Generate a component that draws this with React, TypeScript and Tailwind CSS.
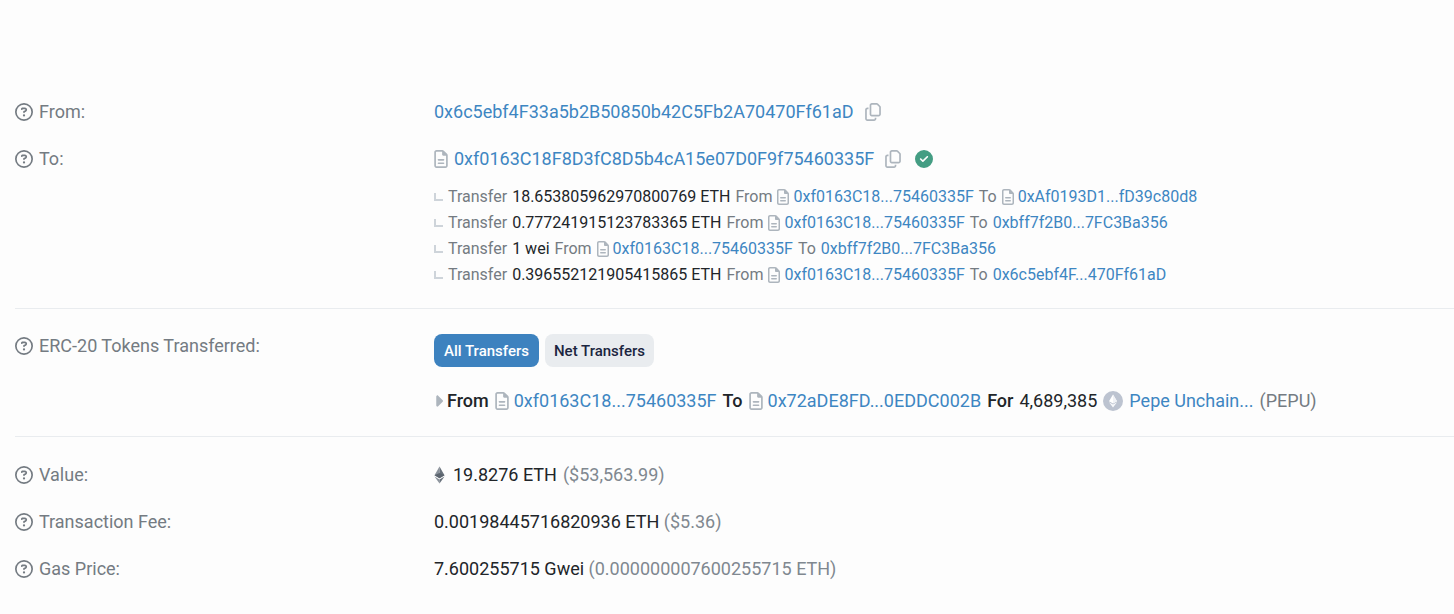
import type { ReactNode } from "react";
import {
  FaCaretRight,
  FaCircleCheck,
  FaRegCircleQuestion,
  FaRegCopy,
  FaRegFileLines,
} from "react-icons/fa6";

type Party = {
  address: string;
  contract?: boolean;
};

type InternalTransfer = {
  amount: string;
  from: Party;
  to: Party;
};

const ROUTER: Party = { address: "0xf0163C18...75460335F", contract: true };

const internalTransfers: InternalTransfer[] = [
  {
    amount: "18.653805962970800769 ETH",
    from: ROUTER,
    to: { address: "0xAf0193D1...fD39c80d8", contract: true },
  },
  {
    amount: "0.777241915123783365 ETH",
    from: ROUTER,
    to: { address: "0xbff7f2B0...7FC3Ba356" },
  },
  {
    amount: "1 wei",
    from: ROUTER,
    to: { address: "0xbff7f2B0...7FC3Ba356" },
  },
  {
    amount: "0.396552121905415865 ETH",
    from: ROUTER,
    to: { address: "0x6c5ebf4F...470Ff61aD" },
  },
];

function Row({ label, children }: { label: string; children: ReactNode }) {
  return (
    <div className="grid grid-cols-[419px_1fr]">
      <div className="flex h-6 items-center gap-[6px] text-[#747b82]">
        <FaRegCircleQuestion className="size-[18px]" />
        {label}
      </div>
      <div className="min-w-0">{children}</div>
    </div>
  );
}

function AddressLink({ children }: { children: ReactNode }) {
  return (
    <a href="#" className="text-[#3d86c2] hover:text-[#0a58ca]">
      {children}
    </a>
  );
}

function CopyButton() {
  return (
    <button type="button" aria-label="Copy address" className="text-[#adb5bd]">
      <FaRegCopy className="size-[18px]" />
    </button>
  );
}

function SmallParty({ address, contract }: Party) {
  return (
    <span className="flex items-center gap-1">
      {contract && <FaRegFileLines className="h-4 w-3 text-[#adb5bd]" />}
      <AddressLink>{address}</AddressLink>
    </span>
  );
}

function TokenParty({ address, contract }: Party) {
  return (
    <span className="flex items-center gap-[5px]">
      {contract && <FaRegFileLines className="h-[18px] w-[14px] text-[#adb5bd]" />}
      <AddressLink>{address}</AddressLink>
    </span>
  );
}

function EthIcon() {
  return (
    <svg className="h-[18px] w-[11px]" viewBox="0 0 11 18">
      <path d="M5.5 0.5 0.5 9.2 5.5 12.2Z" fill="#8a929b" />
      <path d="M5.5 0.5 10.5 9.2 5.5 12.2Z" fill="#68717b" />
      <path d="M0.5 10.4 5.5 13.4V17.5Z" fill="#8a929b" />
      <path d="M10.5 10.4 5.5 13.4V17.5Z" fill="#68717b" />
      <path d="M0.5 9.2 5.5 7 10.5 9.2 5.5 12.2Z" fill="#5c656f" />
    </svg>
  );
}

function TokenLogo() {
  return (
    <svg className="size-5" viewBox="0 0 20 20">
      <circle cx="10" cy="10" r="10" fill="#bcc3d0" />
      <path d="M10 3.5 6 10.2 10 12.5 14 10.2Z" fill="#fff" />
      <path d="M10 3.5V12.5L14 10.2Z" fill="#f0f2f6" />
      <path d="M6 11.2 10 13.5 14 11.2 10 16.5Z" fill="#f8f9fb" />
    </svg>
  );
}

export default function App() {
  return (
    <main className="min-h-screen bg-[#fdfdfd] pt-[100px] pb-8 pl-[15px] font-['Roboto',sans-serif] text-[18px] leading-6 text-[#212529]">
      <section className="flex flex-col gap-[23px] border-b border-[#e9ecef] pb-5">
        <Row label="From:">
          <div className="flex items-center gap-[10px]">
            <AddressLink>0x6c5ebf4F33a5b2B50850b42C5Fb2A70470Ff61aD</AddressLink>
            <CopyButton />
          </div>
        </Row>
        <Row label="To:">
          <div className="flex items-center">
            <FaRegFileLines className="mr-[6px] h-[18px] w-[14px] text-[#adb5bd]" />
            <AddressLink>0xf0163C18F8D3fC8D5b4cA15e07D0F9f75460335F</AddressLink>
            <span className="ml-[10px] flex items-center gap-[13px]">
              <CopyButton />
              <FaCircleCheck className="size-[18px] text-[#449d83]" />
            </span>
          </div>
          <ul className="mt-[13px] text-[16px]">
            {internalTransfers.map((transfer) => (
              <li key={transfer.amount} className="flex h-[26px] items-center gap-[5px] text-[#747b82]">
                <span className="h-2 w-[9px] border-b-2 border-l-2 border-[#ced4da]" />
                <span>Transfer</span>
                <span className="text-[#212529]">{transfer.amount}</span>
                <span>From</span>
                <SmallParty {...transfer.from} />
                <span>To</span>
                <SmallParty {...transfer.to} />
              </li>
            ))}
          </ul>
        </Row>
      </section>

      <section className="border-b border-[#e9ecef] pt-[25px] pb-[23px]">
        <Row label="ERC-20 Tokens Transferred:">
          <div className="flex gap-[6px] text-[15px] font-medium">
            <button type="button" className="h-[33px] rounded-lg bg-[#3d82bf] px-[10px] text-white">
              All Transfers
            </button>
            <button type="button" className="h-[33px] rounded-lg bg-[#e9ecef] px-[9px] text-[#1b2540]">
              Net Transfers
            </button>
          </div>
          <div className="mt-[22px] flex items-center gap-[6px]">
            <span className="flex items-center gap-1">
              <FaCaretRight className="h-[18px] w-[9px] text-[#adb5bd]" />
              <span className="font-medium">From</span>
            </span>
            <TokenParty {...ROUTER} />
            <span className="font-medium">To</span>
            <TokenParty address="0x72aDE8FD...0EDDC002B" contract />
            <span className="font-medium">For</span>
            <span>4,689,385</span>
            <TokenLogo />
            <AddressLink>Pepe Unchain...</AddressLink>
            <span className="text-[#747b82]">(PEPU)</span>
          </div>
        </Row>
      </section>

      <section className="flex flex-col gap-[23px] pt-[26px]">
        <Row label="Value:">
          <div className="flex items-center gap-[6px]">
            <span className="mr-[2px]">
              <EthIcon />
            </span>
            <span>19.8276 ETH</span>
            <span className="text-[#808890]">($53,563.99)</span>
          </div>
        </Row>
        <Row label="Transaction Fee:">
          0.00198445716820936 ETH <span className="text-[#808890]">($5.36)</span>
        </Row>
        <Row label="Gas Price:">
          7.600255715 Gwei <span className="text-[#808890]">(0.000000007600255715 ETH)</span>
        </Row>
      </section>
    </main>
  );
}
